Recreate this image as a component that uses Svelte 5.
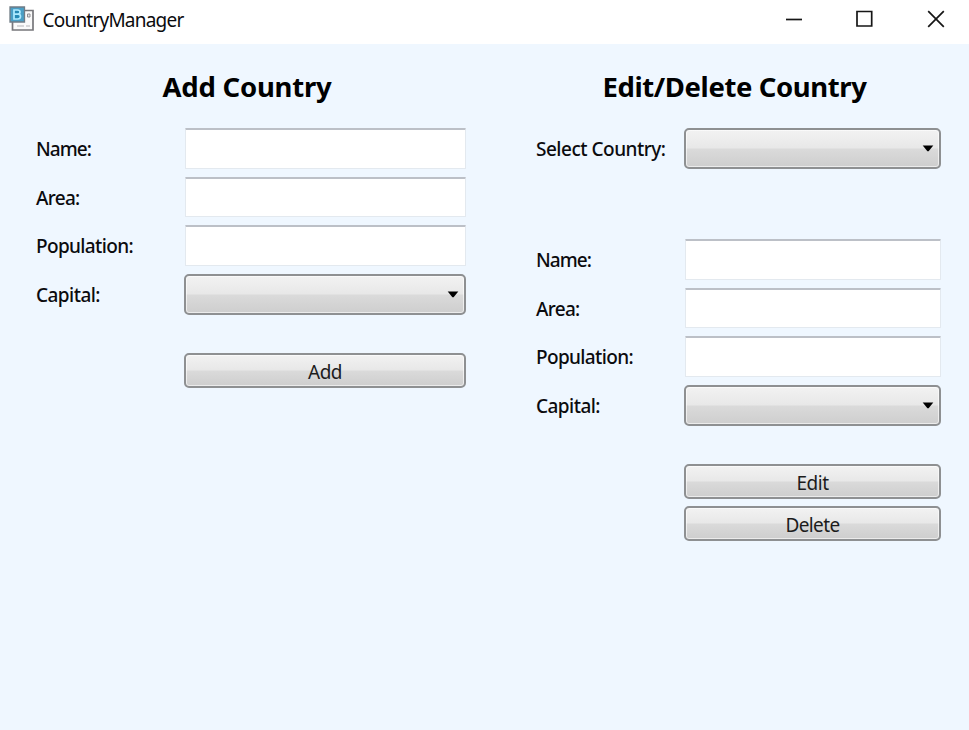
<script>
  const fields = [
    { label: 'Name:', width: 55 },
    { label: 'Area:', width: 43.5 },
    { label: 'Population:', width: 97 },
    { label: 'Capital:', width: 64, combo: true }
  ];

  // Scales letter spacing so that a text run takes up the given width.
  function fit(node, width) {
    const apply = () => {
      node.style.letterSpacing = '0px';
      const natural = node.getBoundingClientRect().width;
      node.style.letterSpacing = (width - natural) / node.textContent.length + 'px';
    };
    apply();
    document.fonts?.ready.then(apply);
  }
</script>

{#snippet combo()}
  <button class="combo" aria-label="Choose">
    <svg width="12" height="7" viewBox="0 0 12 7"><path d="M.7.5h10.6L6.6 6.2H5.4z" fill="#000" /></svg>
  </button>
{/snippet}

{#snippet rows()}
  {#each fields as f}
    <div class="row">
      <span class="label"><span use:fit={f.width}>{f.label}</span></span>
      {#if f.combo}
        {@render combo()}
      {:else}
        <input type="text" aria-label={f.label} />
      {/if}
    </div>
  {/each}
{/snippet}

<div class="window">
  <header>
    <svg class="logo" width="26" height="26" viewBox="0 0 26 26">
      <path d="M3.500 4.500h20.500v19.500H3.500z" fill="#fafafa" stroke="#77777b" stroke-width="1.700" />
      <path d="M18.500 8h2.500v3h-2.500z" fill="#e8e8ea" stroke="#8d8d92" />
      <path d="M8 20h7M17 20h4" stroke="#b4b4b8" />
      <path d="M1 1h14.500v15H1z" fill="#4a9fc6" stroke="#707c86" stroke-width="1.300" />
      <path d="M5 4h3.500q2.500 0 2.500 2t-2.300 2.200q2.800 0 2.800 2.300T8.700 13H5z M5 8.200h4" fill="#2588b4" stroke="#aeeaff" stroke-width="1.700" />
    </svg>
    <span class="caption"><span use:fit={141}>CountryManager</span></span>
    <div class="controls">
      <svg width="18" height="18" viewBox="0 0 18 18"><path d="M1 9.500h16" /></svg>
      <svg width="18" height="18" viewBox="0 0 18 18"><path d="M1 1.500h14.700v14.500H1z" /></svg>
      <svg width="18" height="18" viewBox="0 0 18 18"><path d="M1.200 1.200l15.600 15.600M16.800 1.200L1.200 16.800" /></svg>
    </div>
  </header>

  <main>
    <section class="add">
      <h2><span use:fit={169}>Add Country</span></h2>
      {@render rows()}
      <div class="actions">
        <button><span use:fit={34}>Add</span></button>
      </div>
    </section>

    <section class="edit">
      <h2><span use:fit={264}>Edit/Delete Country</span></h2>
      <div class="row pick">
        <span class="label"><span use:fit={129.5}>Select Country:</span></span>
        {@render combo()}
      </div>
      {@render rows()}
      <div class="actions">
        <button><span use:fit={32}>Edit</span></button>
        <button><span use:fit={54}>Delete</span></button>
      </div>
    </section>
  </main>
</div>

<style>
  :global(body) { margin: 0; }
  .window {
    width: 969px;
    height: 730px;
    overflow: hidden;
    display: flex;
    flex-direction: column;
    background: #eff7ff;
    color: #0b0b0e;
    font-family: "Noto Sans", "Open Sans", sans-serif;
  }
  header {
    height: 44px;
    box-sizing: border-box;
    flex: none;
    display: flex;
    align-items: flex-start;
    background: #fff;
    padding: 6px 24px 0 9px;
  }
  .caption {
    margin-left: 7.500px;
    font-size: 19px;
    line-height: 28px;
    white-space: nowrap;
  }
  .controls {
    margin: 4px 0 0 auto;
    display: flex;
    gap: 53px;
  }
  .controls svg { fill: none; stroke: #161616; stroke-width: 1.700; }
  main {
    display: grid;
    grid-template-columns: 430px 405px;
    column-gap: 70px;
    padding: 24px 0 0 36px;
  }
  h2 {
    margin: 0;
    height: 60px;
    padding-right: 8px;
    font-size: 27.500px;
    line-height: 37px;
    font-weight: 700;
    text-align: center;
    white-space: nowrap;
    color: #000;
  }
  .row {
    display: grid;
    grid-template-columns: 148px 1fr;
    grid-template-rows: 40.500px;
    height: 40.500px;
    margin-bottom: 8px;
  }
  .pick { margin-bottom: 70.500px; }
  .label {
    font-size: 19px;
    line-height: 43.500px;
    height: 40px;
    font-weight: 500;
    white-space: nowrap;
  }
  input {
    box-sizing: border-box;
    min-width: 0;
    margin: 0 0 0 0.500px;
    padding: 0 8px;
    background: #fff;
    border: 1px solid #e3e9ef;
    border-top: 2px solid #bcc0c7;
    border-radius: 1px;
    outline: none;
    font: inherit;
  }
  button {
    box-sizing: border-box;
    margin: 0;
    padding: 0;
    width: 100%;
    border: 2px solid #8e9092;
    border-radius: 5px;
    box-shadow: inset 0 0 0 1px rgba(255, 255, 255, 0.600);
    background: linear-gradient(#f2f2f2 0%, #e8e8e8 48%, #dadada 52%, #cecece 100%);
    color: #1c1c1c;
    font-family: inherit;
    font-size: 19px;
    line-height: 31px;
    white-space: nowrap;
  }
  .combo {
    display: flex;
    justify-content: flex-end;
    align-items: center;
    height: 41px;
    padding-right: 5.500px;
  }
  .actions {
    display: flex;
    flex-direction: column;
    gap: 7px;
    margin: 39px 0 0 148px;
  }
  .actions button { height: 35px; padding-top: 2px; }
</style>
